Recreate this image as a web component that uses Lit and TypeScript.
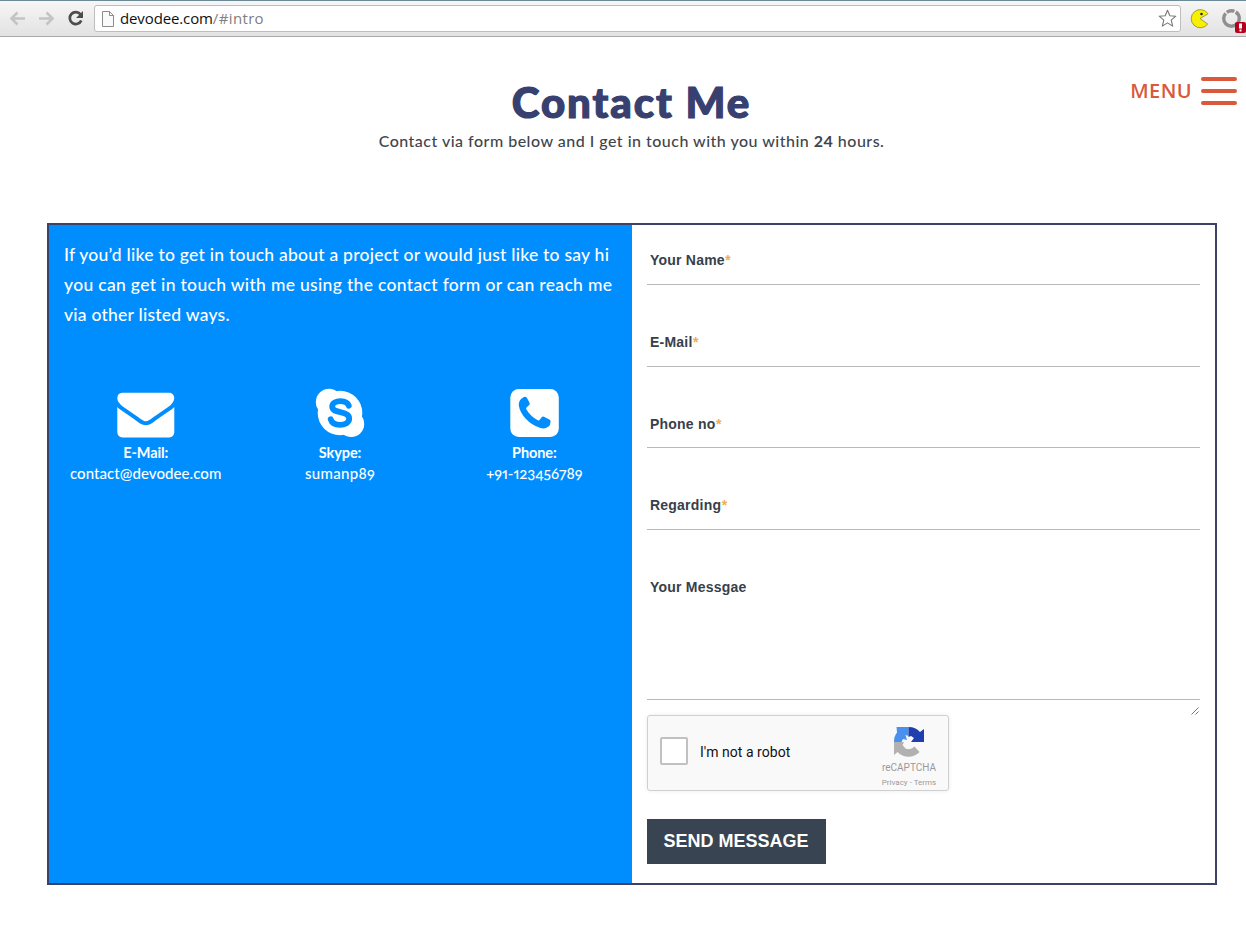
import { LitElement, html, css, svg } from "lit";
import { customElement } from "lit/decorators.js";

@customElement("browser-bar")
class BrowserBar extends LitElement {
  static styles = css`
    :host { display: block; }
    .bar { box-sizing: border-box; height: 37px; display: flex; align-items: flex-start; background: linear-gradient(#f6f6f6, #e2e2e2); border-top: 1px solid #6d8a99; border-bottom: 1px solid #a9a9a9; padding: 4px 0 0 8px; }
    .nav { display: block; flex: none; }
    .address { box-sizing: border-box; width: 1087px; height: 27px; flex: none; display: flex; align-items: center; border: 1px solid #bdbdbd; border-radius: 3px; background: #fff; padding-left: 7px; }
    .url { flex: 1; margin: 0 0 2px 6px; font: 15px/22px "Open Sans", sans-serif; color: #111; }
    .host { letter-spacing: -0.120px; }
    .rest { color: #808080; letter-spacing: 0.350px; }
    .star { margin-right: 3px; }
    .ext { display: block; flex: none; }
  `;
  render() {
    return html`<div class="bar">
      <svg class="nav" width="86" height="27" viewBox="8 5 86 27" fill="none">
        <g stroke="#c4c4c4" stroke-width="2.600">
          <path d="M25 18.500H12M17.500 12.500l-6 6 6 6" />
          <path d="M39 18.500h13M46.500 12.500l6 6-6 6" />
        </g>
        <path d="M80.500 14.300A6 6 0 1 0 81.300 20.500" stroke="#4c4c4c" stroke-width="2.700" />
        <path d="M83 11v7h-7z" fill="#4c4c4c" />
      </svg>
      <div class="address">
        <svg width="12" height="16" viewBox="0 0 12 16" fill="#fafafa" stroke="#8b8b8b"><path d="M.5.5h7l4 4v11H.5zM7.500.5v4h4" /></svg>
        <div class="url"><span class="host">devodee.com</span><span class="rest">/#intro</span></div>
        <svg class="star" width="19" height="19" viewBox="0 0 19 19" fill="#fff" stroke="#777" stroke-width="1.100" stroke-linejoin="round"><path d="M9.500 1.200l2.300 5.500 6 .5-4.600 3.900 1.500 6-5.200-3.200-5.200 3.200 1.500-6L1.200 7.200l6-.5z" /></svg>
      </div>
      <svg class="ext" width="65" height="31" viewBox="1181 5 65 31">
        <path d="M1200 18.600l8-4.800a9.100 9.100 0 1 0-.3 10.200z" fill="#f7f000" stroke="#8d8a20" stroke-width=".8" />
        <circle cx="1201.500" cy="14" r="1.300" fill="#222" />
        <circle cx="1231.500" cy="18.500" r="7.800" fill="none" stroke="#8f8f8f" stroke-width="3.400" stroke-dasharray="30 1.500 8 1.500" />
        <rect x="1235" y="22" width="11" height="11" rx="2" fill="#b5001c" />
        <path d="M1239 23.500h3v5h-3zM1239.500 29.500h2v2h-2z" fill="#fff" />
      </svg>
    </div>`;
  }
}

const icons = {
  mail: svg`<svg width="58" height="50" viewBox="0 0 58 50"><path transform="translate(.3 -3.500) scale(.0318)" fill="#fff" d="M1792 710v794q0 66-47 113t-113 47h-1472q-66 0-113-47t-47-113v-794q44 49 101 87 362 246 497 345 57 42 92.500 65.500t94.500 48 110 24.500h2q51 0 110-24.500t94.500-48 92.500-65.500q170-123 498-345 57-39 100-87zm0-294q0 79-49 151t-122 123q-376 261-468 325-10 7-42.500 31t-54 38.500-52 32.500-57.500 27-50 9h-2q-23 0-50-9t-57.500-27-52-32.500-54-38.500-42.500-31q-91-64-262-182.500t-205-142.500q-62-42-117-115.500t-55-136.500q0-78 41.500-130t118.500-52h1472q65 0 112.500 47t47.500 113z" /></svg>`,
  skype: svg`<svg width="50" height="50" viewBox="0 0 50 50"><g fill="#fff"><circle cx="25" cy="25" r="22.300" /><circle cx="14" cy="14" r="13.200" /><circle cx="36.200" cy="36" r="13" /></g><path d="M33.800 17.800C32.500 14 29 13.200 25.500 13.200c-4.500 0-8.300 1.500-8.300 5.400 0 3.600 3.500 4.600 8 5.600 5 1.100 9 2.200 9 6.300 0 4.200-4.300 6.300-9.200 6.300-5 0-8.200-2-9.300-5.500" fill="none" stroke="#008eff" stroke-width="5.800" stroke-linecap="round" /></svg>`,
  phone: svg`<svg width="50" height="50" viewBox="0 0 50 50"><rect x=".3" y="1" width="48.500" height="48" rx="8.500" fill="#fff" /><path d="M14 9l1.500-.3q1 .2 1.500 1.300l2.500 4.800q.7 1.300-.3 2.300l-2.700 2.500q-.7.800-.2 1.700 4.500 7.500 11.500 11 1 .5 1.700-.3l2.400-2.900q.9-1 2.100-.3l5.300 2.800q1.300.7 1.300 1.700 0 4-2.300 5.500-3.600 2.500-7.800 1.300-8.700-2.700-14.700-9.300-6-6.500-7-13.300-.3-6.200 5.200-8.500z" fill="#008eff" /></svg>`,
};

@customElement("contact-way")
class ContactWay extends LitElement {
  static properties = { kind: {}, label: {}, value: {} };
  declare kind: keyof typeof icons;
  declare label: string;
  declare value: string;
  static styles = css`
    :host { display: block; flex: 1; text-align: center; color: #fff; font-family: Lato, sans-serif; }
    .icon { height: 54px; display: flex; justify-content: center; }
    .label { font-weight: 700; font-size: 14.500px; line-height: 22px; letter-spacing: -0.100px; margin-right: 1px; }
    .value { font-size: 15px; line-height: 19px; font-weight: 500; margin-right: 1px; font-variant-numeric: oldstyle-nums proportional-nums; }
    .mail { letter-spacing: 0.070px; }
    .skype { letter-spacing: 0.300px; }
    .phone { letter-spacing: -0.050px; }
  `;
  render() {
    return html`<div class="icon">${icons[this.kind]}</div>
      <div class="label">${this.label}</div>
      <div class="value ${this.kind}">${this.value}</div>`;
  }
}

@customElement("form-field")
class FormField extends LitElement {
  static properties = { label: {}, required: { type: Boolean }, area: { type: Boolean } };
  declare label: string;
  declare required: boolean;
  declare area: boolean;
  static styles = css`
    :host { display: block; }
    .field { box-sizing: border-box; height: 60px; margin-bottom: 21.670px; padding: 26.200px 3px 0; border-bottom: 1px solid #b9b9b9; font: bold 14px/18px "Liberation Sans", Arial, sans-serif; color: #37404a; letter-spacing: 0.220px; }
    .area { height: 148px; margin-bottom: 0; }
    .star { color: #f0ad4e; margin-left: 0.500px; }
    .grip { display: block; margin: 6px 0 0 auto; }
  `;
  render() {
    return html`<div class="field ${this.area ? "area" : ""}">${this.label}${this.required ? html`<span class="star">*</span>` : ""}</div>
      ${this.area ? html`<svg class="grip" width="10" height="9" viewBox="0 0 10 9" stroke="#777"><path d="M1.500 8.500l7-7M5.500 8.500l3-3" /></svg>` : ""}`;
  }
}

@customElement("robot-check")
class RobotCheck extends LitElement {
  static styles = css`
    :host { display: block; }
    .box { box-sizing: border-box; width: 302px; height: 76px; display: flex; background: #f9f9f9; border: 1px solid #d0d0d0; border-radius: 3px; box-shadow: 0 0 4px rgba(0, 0, 0, 0.080); padding-left: 12px; }
    .tick { box-sizing: border-box; width: 28px; height: 28px; margin-top: 21px; border: 2px solid #c1c1c1; border-radius: 2px; background: #fff; }
    .say { flex: 1; margin: 27px 0 0 12px; font: 14px/18px Roboto, sans-serif; color: #111; letter-spacing: 0.040px; }
    .brand { width: 56px; margin-right: 11px; padding-top: 9px; text-align: center; font-family: Roboto, sans-serif; color: #999; }
    .logo { display: block; margin: 0 auto; }
    .name { font-size: 10px; line-height: 14px; margin-top: 2px; white-space: nowrap; }
    .links { font-size: 8px; line-height: 12px; margin-top: 2px; white-space: nowrap; }
  `;
  render() {
    return html`<div class="box">
      <div class="tick"></div>
      <div class="say">I'm not a robot</div>
      <div class="brand">
        <svg class="logo" width="32" height="34" viewBox="0 0 32 34">
          <path d="M1 17Q1 11 4 7.500L3.500 2H15.500v9l-3-1 1.500 5-4-1-1.500 3z" fill="#4a90ee" />
          <path d="M15.500 2A15 15 0 0 1 27 7l4-3v13H18l3-4-3-2-2.500 1z" fill="#1f3fae" />
          <path d="M1 17h10l-1.500 3 3 3.500q5 2 9-2l5 5.500A15 15 0 0 1 4.500 27L1 30z" fill="#b1b1b1" />
        </svg>
        <div class="name">reCAPTCHA</div>
        <div class="links">Privacy - Terms</div>
      </div>
    </div>`;
  }
}

@customElement("app-root")
class AppRoot extends LitElement {
  static styles = css`
    :host { display: block; height: 926px; overflow: hidden; background: #fff; }
    .head { position: relative; height: 186px; text-align: center; padding: 41px 0 0 17px; box-sizing: border-box; }
    .title { margin: 0; font: 900 42px/48px Lato, sans-serif; color: #37406f; letter-spacing: 1.900px; -webkit-text-stroke: 1.200px #37406f; }
    .sub { margin: 4px 0 0; font: 500 16px/22px Lato, sans-serif; color: #3f454c; letter-spacing: 0.490px; }
    .menu { position: absolute; right: 9px; top: 38px; display: flex; align-items: center; gap: 9px; font: 600 20px/32px "Open Sans", sans-serif; color: #d9593a; letter-spacing: 0.400px; }
    .burger { display: block; }
    .panel { box-sizing: border-box; width: 1170px; height: 662px; margin-left: 47px; border: 2px solid #3c4168; display: flex; }
    .info { width: 583px; background: #008eff; }
    .lines { padding: 15px 0 0 15px; font: 500 17.500px/30px Lato, sans-serif; color: #fff; white-space: nowrap; }
    .l1 { letter-spacing: 0.240px; }
    .l2 { letter-spacing: 0.320px; }
    .l3 { letter-spacing: 0.240px; }
    .ways { display: flex; margin-top: 58px; }
    .form { width: 553px; padding-left: 15px; }
    .send { display: block; box-sizing: border-box; width: 179px; height: 45px; margin-top: 28px; padding: 0 1px 0 0; border: 0; background: #394452; color: #fff; font: bold 18px/43px "Liberation Sans", Arial, sans-serif; }
  `;
  render() {
    return html`<browser-bar></browser-bar>
      <header class="head">
        <h1 class="title">Contact Me</h1>
        <p class="sub">Contact via form below and I get in touch with you within <b>24</b> hours.</p>
        <div class="menu">
          <span>MENU</span>
          <svg class="burger" width="36" height="28" viewBox="0 0 36 28" stroke="#d9593a" stroke-width="4" stroke-linecap="round"><path d="M2 2h32M2 14h32M2 26h32" /></svg>
        </div>
      </header>
      <main class="panel">
        <section class="info">
          <div class="lines">
            <div class="l1">If you’d like to get in touch about a project or would just like to say hi</div>
            <div class="l2">you can get in touch with me using the contact form or can reach me</div>
            <div class="l3">via other listed ways.</div>
          </div>
          <div class="ways">
            <contact-way kind="mail" label="E-Mail:" value="contact@devodee.com"></contact-way>
            <contact-way kind="skype" label="Skype:" value="sumanp89"></contact-way>
            <contact-way kind="phone" label="Phone:" value="+91-123456789"></contact-way>
          </div>
        </section>
        <section class="form">
          <form-field label="Your Name" required></form-field>
          <form-field label="E-Mail" required></form-field>
          <form-field label="Phone no" required></form-field>
          <form-field label="Regarding" required></form-field>
          <form-field label="Your Messgae" area></form-field>
          <robot-check></robot-check>
          <button class="send">SEND MESSAGE</button>
        </section>
      </main>`;
  }
}
